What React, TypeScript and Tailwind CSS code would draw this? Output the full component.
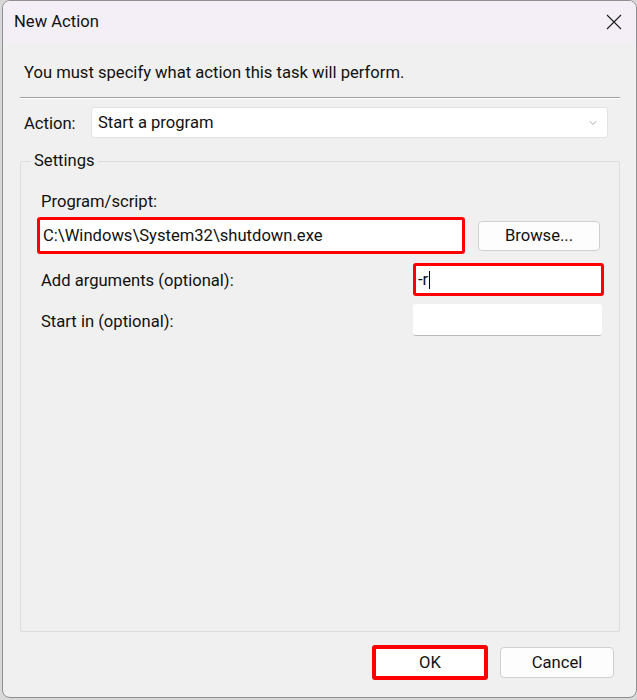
import { ChevronDown } from "lucide-react";

const font = { fontFamily: "Roboto, 'Liberation Sans', sans-serif" };

function CloseIcon() {
  return (
    <svg width="16" height="16" viewBox="0 0 16 16" fill="none" stroke="#1b1b1b" strokeWidth="1.1">
      <path d="M1 1 L15 15 M15 1 L1 15" />
    </svg>
  );
}

export default function App() {
  return (
    <div className="w-[637px] h-[700px] overflow-hidden bg-[#d8d8d8] text-[16.6px] text-[#111]" style={font}>
      <div className="ml-[2px] w-[635px] h-[698px] flex flex-col overflow-hidden rounded-lg border border-[#8f8f8f] bg-[#f0f0f0]">
        {/* Title bar */}
        <div className="h-[42px] shrink-0 flex items-center justify-between pl-[11px] pr-[14px] bg-[#f4eff7]">
          <span className="leading-5">New Action</span>
          <CloseIcon />
        </div>

        {/* Body */}
        <div className="flex-1 min-h-0 flex flex-col pl-[17px] pr-[16px]">
          <p className="mt-[20px] pl-[4px] leading-5">You must specify what action this task will perform.</p>
          <div className="mt-[14px] border-t border-[#a0a0a0] border-b border-b-white" />

          {/* Action */}
          <div className="mt-[8px] flex items-center pr-[12px]">
            <span className="w-[71px] pl-[4px] pt-[3px] leading-5">Action:</span>
            <div className="flex-1 h-[31px] flex items-center justify-between pl-[6px] pr-[8px] bg-white border border-[#e3e3e3] rounded-[3px]">
              <span className="leading-5">Start a program</span>
              <ChevronDown className="w-[12px] h-[12px] text-[#8a8a8a]" strokeWidth={1.5} />
            </div>
          </div>

          {/* Settings group */}
          <fieldset className="mt-[13px] flex-1 min-h-0 border border-[#dcdcdc] rounded-[2px] pl-[16px] pr-[15px]">
            <legend className="ml-[-6px] px-[3px] leading-5">Settings</legend>

            <div className="mt-[21px] pl-[4px] leading-5">Program/script:</div>
            <div className="mt-[5px] flex items-center gap-[13px]">
              <div className="w-[428px] h-[37px] flex items-center pl-[3px] bg-white border-[3px] border-[#ff0000] rounded-[3px]">
                <span className="leading-5">C:\Windows\System32\shutdown.exe</span>
              </div>
              <button className="w-[122px] h-[30px] flex items-center justify-center bg-[#fdfdfd] border border-[#d0d0d0] rounded-[4px] leading-5">
                Browse...
              </button>
            </div>

            <div className="mt-[9px] flex items-center">
              <span className="w-[376px] pl-[4px] pt-[3px] leading-5">Add arguments (optional):</span>
              <div className="w-[191px] h-[33px] flex items-center pl-[2px] bg-white border-[3px] border-[#ff0000] rounded-[3px]">
                <span className="leading-5">-r</span>
                <span className="ml-[1px] w-[1px] h-[18px] bg-black" />
              </div>
            </div>

            <div className="mt-[8px] flex items-center">
              <span className="w-[376px] pl-[4px] pt-[4px] leading-5">Start in (optional):</span>
              <div className="w-[189px] h-[32px] bg-white border-b border-[#b9b9b9] rounded-[3px]" />
            </div>
          </fieldset>

          {/* Buttons */}
          <div className="mt-[13px] mb-[17px] flex items-center justify-end gap-[12px] pr-[6px]">
            <button className="w-[116px] h-[35px] flex items-center justify-center bg-white border-[4px] border-[#ff0000] rounded-[3px] leading-5">
              OK
            </button>
            <button className="w-[114px] h-[31px] flex items-center justify-center bg-[#fdfdfd] border border-[#d0d0d0] rounded-[4px] leading-5">
              Cancel
            </button>
          </div>
        </div>
      </div>
    </div>
  );
}
